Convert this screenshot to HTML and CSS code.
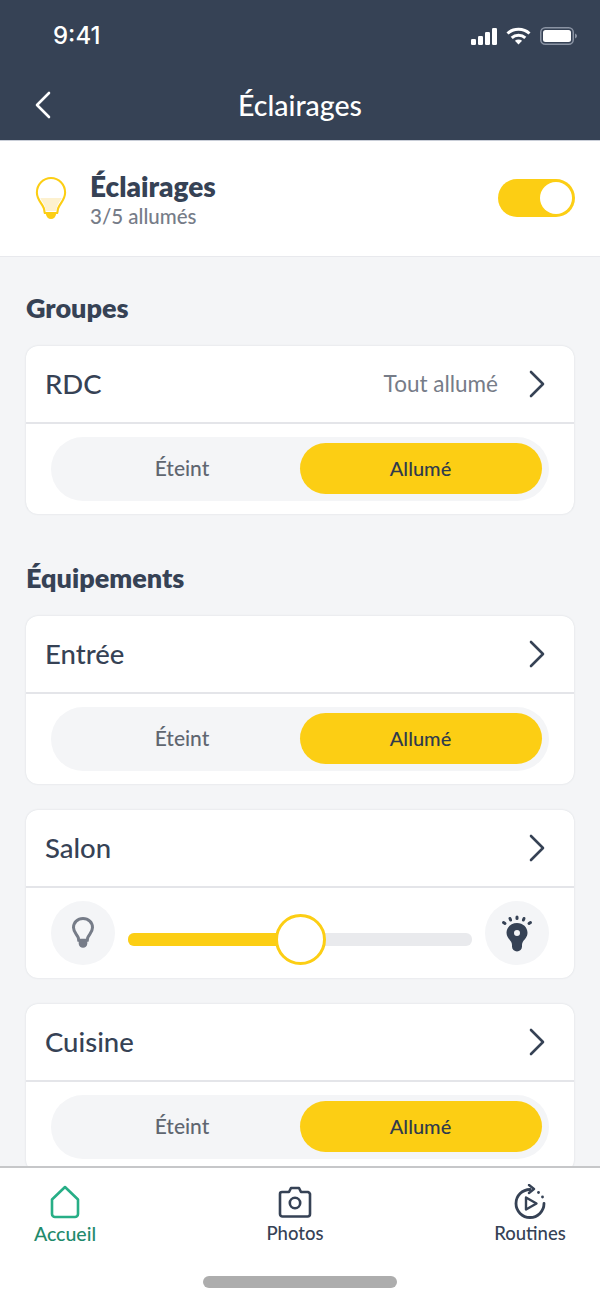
FILE: index.html
```html
<!DOCTYPE html>
<html lang="fr">
<head>
    <meta charset="UTF-8">
    <title>Éclairages</title>
    <link rel="stylesheet" href="styles.css">
</head>
<body>
    <div class="app">
        <!--barre du haut-->
        <header class="top">
            <div class="status">
                <span class="time">9:41</span>
                <div class="status-icons">
                    <svg width="26" height="17" viewBox="0 0 26 17" fill="#fff"><rect x="0" y="11" width="5" height="6" rx="1.2"/><rect x="7" y="8" width="5" height="9" rx="1.2"/><rect x="14" y="4" width="5" height="13" rx="1.2"/><rect x="21" y="0" width="5" height="17" rx="1.2"/></svg>
                    <svg width="25" height="18" viewBox="0 0 25 18" fill="none" stroke="#fff" stroke-width="3"><path d="M1.5 6.5C7.5 .9 17.5 .9 23.5 6.5"/><path d="M5.7 10.8C9.5 7.3 15.5 7.3 19.3 10.8"/><path d="M12.5 17.5l-3.6-3.7c2-1.7 5.2-1.7 7.2 0z" fill="#fff" stroke="none"/></svg>
                    <svg width="37" height="18" viewBox="0 0 37 18"><rect x=".75" y=".75" width="32.5" height="16.5" rx="4.5" fill="none" stroke="#8a93a3" stroke-width="1.5"/><rect x="3" y="3" width="28" height="12" rx="2.5" fill="#fff"/><path d="M35 6.5c1.2.4 2 1.4 2 2.5s-.8 2.1-2 2.5z" fill="#8a93a3"/></svg>
                </div>
            </div>
            <div class="nav">
                <svg class="back" width="18" height="28" viewBox="0 0 18 28" fill="none" stroke="#fff" stroke-width="2.6" stroke-linecap="round" stroke-linejoin="round"><path d="M15 2L3 14l12 12"/></svg>
                <h1>Éclairages</h1>
            </div>
        </header>

        <main class="content">
            <section class="summary">
                <svg class="bulb" width="32" height="46" viewBox="0 0 34 46" preserveAspectRatio="none">
                    <path d="M5.6 22h22.8c-1.4 3-3.9 5.500-4.900 8.500-.5 1.500-.5 3-.9 4.500h-11.200c-.4-1.500-.4-3-.9-4.500C9.500 27.500 7 25 5.600 22z" fill="#fdf1cf"/>
                    <path d="M17 2C8.700 2 2 8.500 2 16.600c0 7.400 5.400 10.400 7.300 15.400.6 1.600.6 3.300 1.100 5h13.200c.5-1.700.5-3.400 1.100-5 1.900-5 7.300-8 7.300-15.400C32 8.500 25.300 2 17 2z" fill="none" stroke="#fcce14" stroke-width="2.200"/>
                    <path d="M11.500 38h11c-.6 3-2.600 5-5.500 5s-4.900-2-5.500-5z" fill="#fcce14"/>
                </svg>
                <div class="summary-text">
                    <h2>Éclairages</h2>
                    <p>3/5 allumés</p>
                </div>
                <div class="switch"><span class="knob"></span></div>
            </section>

            <h3 class="section-title first">Groupes</h3>
            <div class="card">
                <div class="card-head">
                    <span class="name">RDC</span>
                    <span class="state">Tout allumé</span>
                    <svg class="chevron" width="18" height="28" viewBox="0 0 18 28" fill="none" stroke="#364255" stroke-width="2.600" stroke-linecap="round" stroke-linejoin="round"><path d="M3 2l12 12L3 26"/></svg>
                </div>
                <div class="card-body">
                    <div class="segment"><span class="off">Éteint</span><span class="on">Allumé</span></div>
                </div>
            </div>

            <h3 class="section-title">Équipements</h3>
            <div class="card">
                <div class="card-head">
                    <span class="name">Entrée</span>
                    <svg class="chevron" width="18" height="28" viewBox="0 0 18 28" fill="none" stroke="#364255" stroke-width="2.600" stroke-linecap="round" stroke-linejoin="round"><path d="M3 2l12 12L3 26"/></svg>
                </div>
                <div class="card-body">
                    <div class="segment"><span class="off">Éteint</span><span class="on">Allumé</span></div>
                </div>
            </div>

            <div class="card">
                <div class="card-head">
                    <span class="name">Salon</span>
                    <svg class="chevron" width="18" height="28" viewBox="0 0 18 28" fill="none" stroke="#364255" stroke-width="2.600" stroke-linecap="round" stroke-linejoin="round"><path d="M3 2l12 12L3 26"/></svg>
                </div>
                <div class="card-body dimmer">
                    <div class="round">
                        <svg width="24" height="34" viewBox="0 0 24 34"><path d="M12 2.500C6.500 2.500 2.500 6.500 2.500 11.500c0 4.800 3.500 6.800 4.700 10 .3 1 .3 2 .5 2.800h8.600c.2-.8.2-1.800.5-2.800 1.200-3.200 4.700-5.200 4.700-10 0-5-4-9-9.500-9z" fill="none" stroke="#767c88" stroke-width="3"/><path d="M7.700 24h8.600v3.500a4.300 4.300 0 0 1-8.600 0z" fill="#767c88"/></svg>
                    </div>
                    <div class="slider">
                        <div class="slider-fill"></div>
                        <div class="slider-thumb"></div>
                    </div>
                    <div class="round">
                        <svg width="32" height="38" viewBox="0 0 32 38"><g fill="none" stroke="#364255" stroke-width="3" stroke-linecap="round"><path d="M2.500 8.500l1.500 1"/><path d="M9 4.500l.6 1.500"/><path d="M16 3v1.600"/><path d="M23 4.500l-.6 1.500"/><path d="M29.500 8.500l-1.500 1"/></g><path fill-rule="evenodd" d="M16 9c-6 0-10.500 4.300-10.500 9.700 0 4.300 3 6.600 4.600 9 .6 1 .8 2 .9 3.300v1.500a5 5 0 0 0 10 0V31c.1-1.300.3-2.300.9-3.300 1.600-2.400 4.600-4.700 4.600-9C26.500 13.300 22 9 16 9zm0 7a3 3 0 1 1 0 6 3 3 0 0 1 0-6z" fill="#364255"/></svg>
                    </div>
                </div>
            </div>

            <div class="card">
                <div class="card-head">
                    <span class="name">Cuisine</span>
                    <svg class="chevron" width="18" height="28" viewBox="0 0 18 28" fill="none" stroke="#364255" stroke-width="2.600" stroke-linecap="round" stroke-linejoin="round"><path d="M3 2l12 12L3 26"/></svg>
                </div>
                <div class="card-body">
                    <div class="segment"><span class="off">Éteint</span><span class="on">Allumé</span></div>
                </div>
            </div>
        </main>

        <!--onglets-->
        <footer class="tabs">
            <div class="tab-row">
                <div class="tab active">
                    <svg width="32" height="34" viewBox="0 0 32 34" fill="none" stroke="#27ae86" stroke-width="2.600" stroke-linejoin="round"><path d="M16 2L3 14.500V29a3 3 0 0 0 3 3h20a3 3 0 0 0 3-3V14.500z"/></svg>
                    <span>Accueil</span>
                </div>
                <div class="tab">
                    <svg width="36" height="34" viewBox="0 0 36 34" fill="none" stroke="#364255" stroke-width="2.600" stroke-linejoin="round"><path d="M12 7l2-4h8l2 4h7a3 3 0 0 1 2 2v20a2.500 2.500 0 0 1-2.500 2.500h-25A2.500 2.500 0 0 1 3 29V9a2 2 0 0 1 2-2z"/><circle cx="18" cy="18" r="5.200"/></svg>
                    <span>Photos</span>
                </div>
                <div class="tab">
                    <svg width="34" height="36" viewBox="0 0 34 36" fill="none" stroke="#364255" stroke-width="2.800" stroke-linecap="round" stroke-linejoin="round"><path d="M17 5.500A14 14 0 1 0 31 19.500"/><path d="M16 1l5 4-5 4" stroke-width="2.400"/><path d="M25.500 8.500h.01"/><path d="M29.500 13h.01"/><path d="M13 13.500l10.500 6-10.500 6z" stroke-width="2.400"/></svg>
                    <span>Routines</span>
                </div>
            </div>
            <div class="home-bar"></div>
        </footer>
    </div>
</body>
</html>
```

FILE: styles.css
```css
* {
    box-sizing: border-box;
}

body, h1, h2, h3, p {
    margin: 0;
    padding: 0;
}

body {
    font-family: "Lato", "Noto Sans", sans-serif;
    color: #364255;
    background: #f4f5f7;
}

.app {
    width: 600px;
    height: 1299px;
    display: flex;
    flex-direction: column;
    overflow: hidden;
}

/* haut */
.top {
    height: 141px;
    flex: none;
    background: #364255;
    border-bottom: 1px solid #c9ced8;
    color: #fff;
}

.status {
    height: 72px;
    padding: 22px 23px 0 53px;
    display: flex;
    justify-content: space-between;
}

.time {
    font-family: "Inter", sans-serif;
    font-size: 24px;
    line-height: 28px;
    font-weight: 500;
}

.status-icons {
    display: flex;
    align-items: center;
    gap: 9px;
    height: 28px;
}

.nav {
    height: 68px;
    padding-bottom: 2px;
    position: relative;
    display: flex;
    align-items: center;
    justify-content: center;
}

.nav h1 {
    font-size: 28.5px;
    font-weight: 500;
}

.back {
    position: absolute;
    left: 34px;
    top: 19px;
}

/* resume */
.summary {
    height: 116px;
    background: #fff;
    border-bottom: 1px solid #e8e9ed;
    display: flex;
    align-items: center;
    padding: 0 25px 0 35px;
}

.summary-text {
    flex: 1;
    margin-left: 23px;
    padding-top: 2px;
}

.summary-text h2 {
    font-size: 28px;
    line-height: 30px;
    font-weight: 800;
}

.summary-text p {
    font-size: 20.5px;
    line-height: 24px;
    font-weight: 500;
    color: #767c88;
    margin-top: 3px;
}

.switch {
    width: 77px;
    height: 38px;
    margin-bottom: 1px;
    border-radius: 19px;
    background: #fcce14;
    padding: 3px;
    display: flex;
    justify-content: flex-end;
}

.knob {
    width: 32px;
    height: 32px;
    border-radius: 50%;
    background: #fff;
}

/* sections */
.section-title {
    font-size: 27px;
    line-height: 30px;
    font-weight: 800;
    padding: 0 26px;
    margin: 49px 0 23px;
}

.section-title.first {
    margin-top: 36px;
}

.card {
    margin: 0 26px 26px;
    background: #fff;
    border-radius: 12px;
    box-shadow: 0 0 2px rgba(54, 67, 90, 0.16);
    overflow: hidden;
}

.card-head {
    height: 78px;
    display: flex;
    align-items: center;
    padding: 0 28px 1px 19px;
    border-bottom: 2px solid #e4e5e9;
}

.name {
    flex: 1;
    font-size: 27.5px;
    font-weight: 500;
}

.state {
    font-size: 22.5px;
    color: #767c88;
    margin-right: 30px;
}

.card-body {
    height: 90px;
    padding: 13px 25px 0;
}

.segment {
    height: 64px;
    border-radius: 32px;
    background: #f4f5f7;
    padding: 6px 7px;
    display: flex;
}

.segment span {
    height: 51px;
    line-height: 50px;
    text-align: center;
    font-weight: 500;
    border-radius: 26px;
}

.segment .off {
    flex: 1;
    padding-left: 6px;
    font-size: 21px;
    color: #5f6670;
}

.segment .on {
    width: 242px;
    padding-right: 1px;
    font-size: 20px;
    background: #fcce14;
    color: #2f3a4c;
}

.dimmer {
    display: flex;
    align-items: center;
    gap: 13px;
    padding: 0 25px;
}

.round {
    width: 64px;
    height: 64px;
    flex: none;
    border-radius: 50%;
    background: #f4f5f7;
    display: flex;
    align-items: center;
    justify-content: center;
}

.slider {
    flex: 1;
    height: 13px;
    margin-top: 12px;
    border-radius: 6px;
    background: #e9eaed;
    position: relative;
}

.slider-fill {
    width: 172px;
    height: 13px;
    border-radius: 6px;
    background: #fcce14;
}

.slider-thumb {
    position: absolute;
    left: 147px;
    top: -19px;
    width: 51px;
    height: 51px;
    border-radius: 50%;
    background: #fff;
    border: 3px solid #fcce14;
}

.content {
    flex: 1;
    overflow: hidden;
}

/* onglets */
.tabs {
    height: 133px;
    flex: none;
    background: #fff;
    border-top: 2px solid #c6c7c9;
}

.tab-row {
    height: 108px;
    padding: 16px 0 0;
    display: flex;
    justify-content: space-between;
}

.tab {
    width: 190px;
    display: flex;
    flex-direction: column;
    align-items: center;
    font-size: 18.5px;
    font-weight: 500;
}

.tab svg {
    height: 36px;
}

.tab span {
    margin-top: 2px;
}

.tab.active {
    color: #1f8a6c;
    font-size: 19.5px;
}

.tab:first-child {
    margin-left: -30px;
}

.tab:nth-child(2) {
    margin-left: -5px;
}

.tab:last-child {
    margin-right: -25px;
}

.home-bar {
    width: 194px;
    height: 12px;
    margin: 0 auto;
    border-radius: 6px;
    background: #adadad;
}
```
